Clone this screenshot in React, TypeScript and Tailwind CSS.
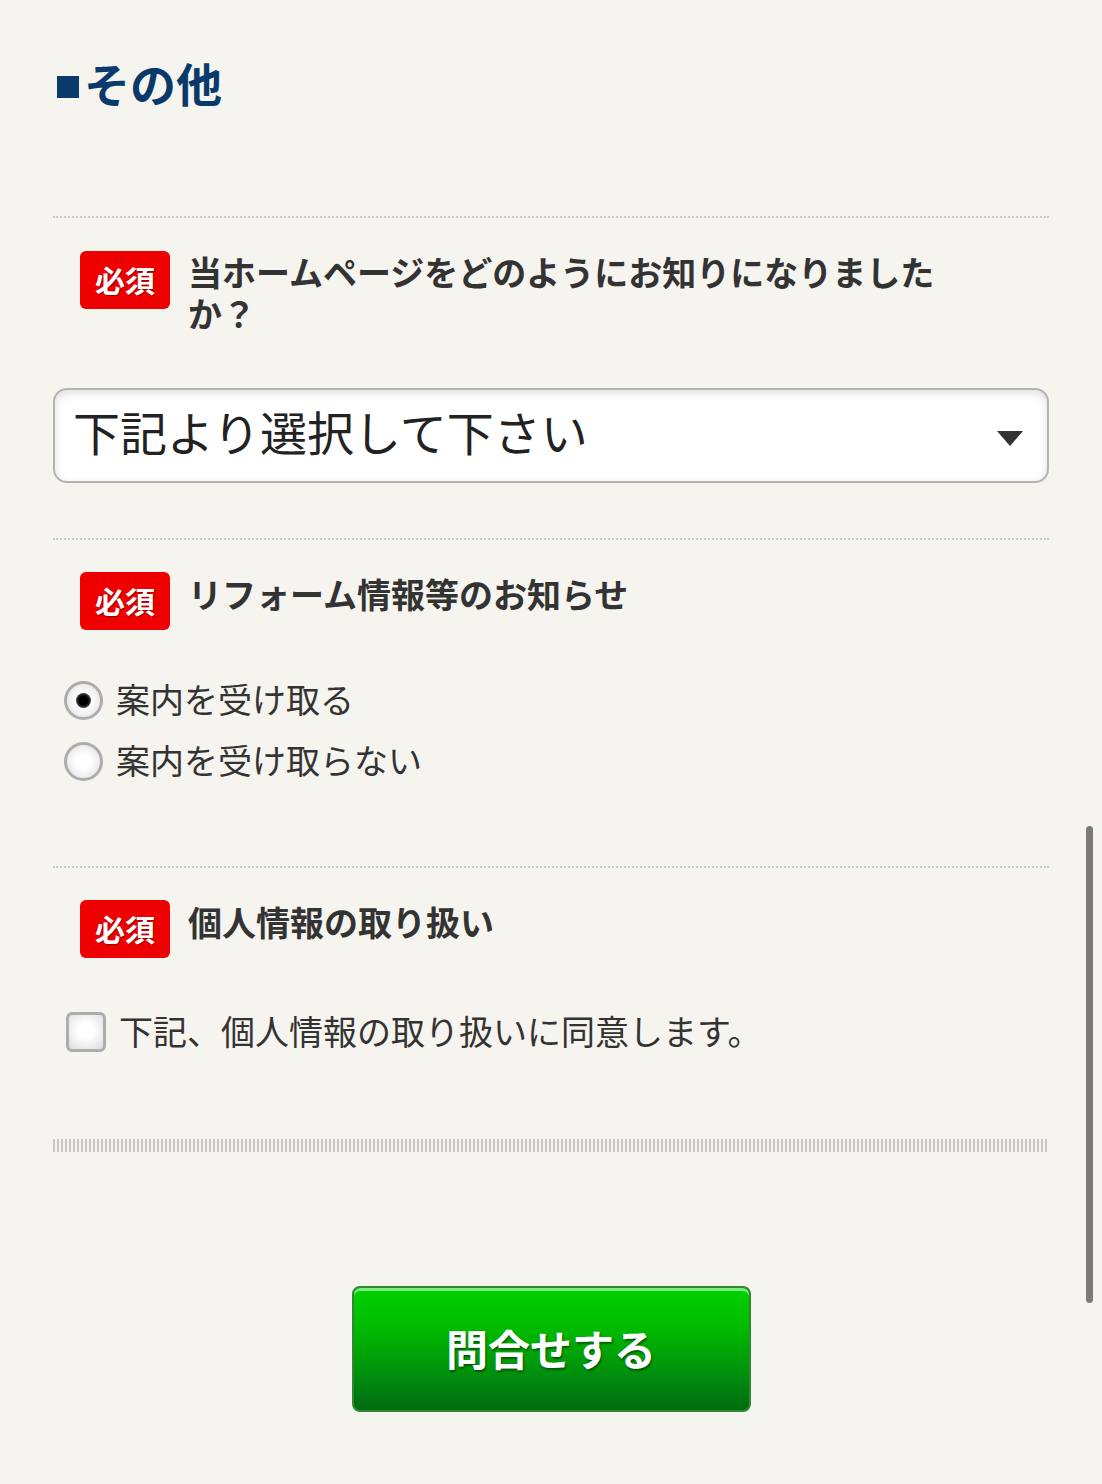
const font = "font-['Noto_Sans_CJK_JP','Noto_Sans',sans-serif]";

const Badge = () => (
  <span className="flex h-[58px] w-[90px] shrink-0 items-center justify-center rounded-[6px] bg-[#ee0000] pb-[2px] text-[30px] font-bold leading-none text-white [text-shadow:1px_1px_1px_rgba(90,0,0,0.6)]">
    必須
  </span>
);

const Radio = ({ checked, label }: { checked?: boolean; label: string }) => (
  <label className="flex h-[61px] items-center">
    <span className="ml-[11px] flex h-[39px] w-[39px] items-center justify-center rounded-full border-[3px] border-[#adadad] bg-[radial-gradient(circle_at_50%_50%,#ffffff_30%,#dedede_100%)]">
      {checked && (
        <span className="h-[15px] w-[15px] rounded-full bg-[radial-gradient(circle,#000_40%,#444_70%,#888_100%)]" />
      )}
    </span>
    <span className="ml-[13px] pb-[3px] text-[34px] leading-none text-[#333]">{label}</span>
  </label>
);

const Dotted = () => <div className="border-t-2 border-dotted border-[#c9c9c4]" />;

export default function App() {
  return (
    <div className={`${font} relative min-h-[1484px] bg-[#f5f4ee] px-[53px] pb-[71px] pt-[54px]`}>
      <h2 className="flex items-center text-[46px] font-bold leading-[56px] text-[#0a3a6b]">
        <span className="ml-[4px] mr-[5px] inline-block h-[22px] w-[22px] translate-y-[5px] bg-[#0a3a6b]" />
        その他
      </h2>

      <div className="mt-[106px]">
        <Dotted />
        <div className="mt-[33px] flex items-start pl-[27px]">
          <Badge />
          <p className="ml-[18px] w-[770px] text-[34px] font-bold leading-[41px] text-[#333]">
            当ホームページをどのようにお知りになりましたか？
          </p>
        </div>
        <div className="relative mt-[55px] flex h-[95px] items-center rounded-[14px] border-2 border-[#b3b3b3] bg-white pb-[10px] pl-[18px] shadow-[inset_0_3px_10px_rgba(0,0,0,0.13)]">
          <span className="text-[47px] leading-none text-[#222]">下記より選択して下さい</span>
          <svg className="absolute right-[24px] top-[41px]" width="26" height="15" viewBox="0 0 26 15">
            <path d="M0 0 H26 L13 15 Z" fill="#333" />
          </svg>
        </div>
      </div>

      <div className="mt-[55px]">
        <Dotted />
        <div className="mt-[32px] flex items-start pl-[27px]">
          <Badge />
          <p className="ml-[18px] mt-[1px] text-[34px] font-bold leading-[41px] text-[#333]">
            リフォーム情報等のお知らせ
          </p>
        </div>
        <div className="mt-[40px] flex flex-col">
          <Radio checked label="案内を受け取る" />
          <Radio label="案内を受け取らない" />
        </div>
      </div>

      <div className="mt-[74px]">
        <Dotted />
        <div className="mt-[32px] flex items-start pl-[27px]">
          <Badge />
          <p className="ml-[18px] mt-[1px] text-[34px] font-bold leading-[41px] text-[#333]">
            個人情報の取り扱い
          </p>
        </div>
        <label className="mt-[54px] flex h-[40px] items-center">
          <span className="ml-[13px] h-[40px] w-[40px] rounded-[6px] border-[3px] border-[#adadad] bg-[radial-gradient(circle_at_50%_45%,#ffffff_30%,#dcdcdc_100%)]" />
          <span className="ml-[13px] pb-[2px] text-[34px] leading-none text-[#333]">
            下記、個人情報の取り扱いに同意します。
          </span>
        </label>
      </div>

      <div className="mt-[87px] h-[13px] bg-[repeating-linear-gradient(90deg,#c6c6c2_0_2px,transparent_2px_4px)]" />

      <div className="mt-[134px] flex justify-center">
        <button className="flex h-[126px] w-[399px] items-center justify-center rounded-[8px] border-2 border-[#2f8a2f] bg-[linear-gradient(180deg,#00d200_0%,#00b800_35%,#008a10_75%,#006b10_100%)] pb-[4px] text-[42px] font-bold text-white shadow-[inset_0_3px_0_rgba(255,255,255,0.5)] [text-shadow:1px_2px_2px_rgba(0,60,0,0.7)]">
          問合せする
        </button>
      </div>

      <div className="absolute left-[1086px] top-[826px] h-[477px] w-[7px] rounded-full bg-[#7b7b76]" />
    </div>
  );
}
